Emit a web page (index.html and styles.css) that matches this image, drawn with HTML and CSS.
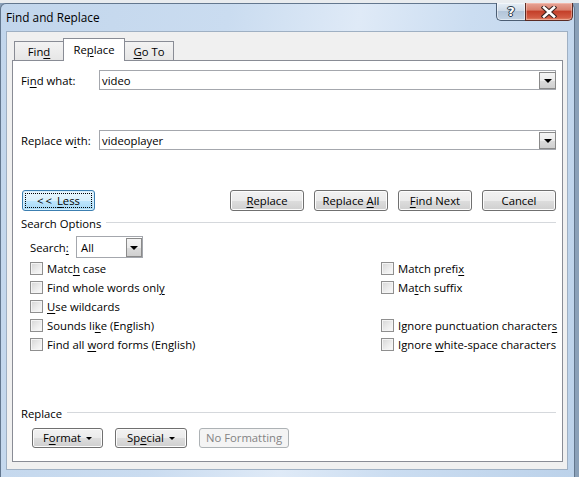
FILE: index.html
```html
<!DOCTYPE html>
<html>
<head>
<meta charset="utf-8">
<title>Find and Replace</title>
<link rel="stylesheet" href="styles.css">
</head>
<body>
<div class="window">
  <div class="titlebar">
    <span class="title">Find and Replace</span>
    <div class="caption">
      <div class="cbtn help"><span>?</span></div>
      <div class="cbtn close">
        <svg width="16" height="12" viewBox="0 0 16 12">
          <path d="M3 1.5 L13 10.5 M13 1.5 L3 10.5" stroke="#3a2420" stroke-width="4.6" stroke-linecap="square" fill="none"/>
          <path d="M3 1.5 L13 10.5 M13 1.5 L3 10.5" stroke="#ffffff" stroke-width="2.6" stroke-linecap="square" fill="none"/>
        </svg>
      </div>
    </div>
  </div>
  <div class="client">
    <div class="tabs">
      <div class="tab t-find"><span>Fin<u>d</u></span></div>
      <div class="tab active t-replace"><span>Re<u>p</u>lace</span></div>
      <div class="tab t-goto"><span><u>G</u>o To</span></div>
    </div>
    <div class="panel">
      <div class="field-row r1">
        <span class="flabel">Fi<u>n</u>d what:</span>
        <div class="combo"><span class="ctext">video</span><span class="ddbtn"><i class="tri"></i></span></div>
      </div>
      <div class="field-row r2">
        <span class="flabel">Replace w<u>i</u>th:</span>
        <div class="combo"><span class="ctext">videoplayer</span><span class="ddbtn"><i class="tri"></i></span></div>
      </div>
      <div class="btn-row">
        <div class="btn focus less"><span class="focusrect"><span><span class="ll">&lt;&lt;</span> <u>L</u>ess</span></span></div>
        <div class="spacer"></div>
        <div class="btn wide"><span><u>R</u>eplace</span></div>
        <div class="btn wide"><span>Replace <u>A</u>ll</span></div>
        <div class="btn wide"><span><u>F</u>ind Next</span></div>
        <div class="btn wide"><span>Cancel</span></div>
      </div>
      <div class="group-head gh1"><span>Search Options</span><i class="rule"></i></div>
      <div class="search-row">
        <span class="slabel">Search<u>:</u></span>
        <div class="select"><span class="ctext">All</span><span class="ddbtn sel"><i class="tri"></i></span></div>
      </div>
      <div class="checks">
        <div class="chk"><i class="box"></i><span>Matc<u>h</u> case</span></div>
        <div class="chk"><i class="box"></i><span>Match prefi<u>x</u></span></div>
        <div class="chk"><i class="box"></i><span>Find whole words onl<u>y</u></span></div>
        <div class="chk"><i class="box"></i><span>Ma<u>t</u>ch suffix</span></div>
        <div class="chk"><i class="box"></i><span><u>U</u>se wildcards</span></div>
        <div class="chk empty"></div>
        <div class="chk"><i class="box"></i><span>Sounds li<u>k</u>e (English)</span></div>
        <div class="chk"><i class="box"></i><span>Ignore punctuation character<u>s</u></span></div>
        <div class="chk"><i class="box"></i><span>Find all <u>w</u>ord forms (English)</span></div>
        <div class="chk"><i class="box"></i><span>Ignore <u>w</u>hite-space characters</span></div>
      </div>
      <div class="group-head gh2"><span>Replace</span><i class="rule"></i></div>
      <div class="bottom-row">
        <div class="btn fmt"><span>F<u>o</u>rmat</span><i class="mtri"></i></div>
        <div class="btn spc"><span>Sp<u>e</u>cial</span><i class="mtri"></i></div>
        <div class="btn disabled nof"><span>No Formatting</span></div>
      </div>
    </div>
  </div>
</div>
</body>
</html>
```
FILE: styles.css
```css
html, body {
  margin: 0;
  padding: 0;
}
body {
  width: 579px;
  height: 477px;
  overflow: hidden;
  background: linear-gradient(#e9ecef 0, #e9ecef 3px, #8aa0b8 3px);
  font-family: "Open Sans", "Noto Sans", sans-serif;
  font-size: 11.3px;
  color: #000;
}
u {
  text-decoration: underline;
  text-underline-offset: 2px;
  text-decoration-thickness: 1px;
}
.window {
  margin-top: 3px;
  width: 575px;
  height: 474px;
  box-sizing: border-box;
  border: 1px solid #63778e;
  border-bottom: none;
  border-radius: 6px 6px 0 0;
  background: linear-gradient(100deg, #c2d6ec 0%, #cadcf0 35%, #dfeaf7 55%, #cbddf1 72%, #bcd2ea 100%);
  display: flex;
  flex-direction: column;
}
.titlebar {
  height: 27px;
  display: flex;
  align-items: flex-start;
}
.title {
  margin-left: 5px;
  line-height: 26px;
  font-size: 11.8px;
}
.caption {
  margin-left: auto;
  margin-right: 1px;
  margin-top: -1px;
  display: flex;
}
.cbtn {
  height: 18px;
  box-sizing: border-box;
  border: 1px solid #4c5e74;
  border-top: none;
  display: flex;
  align-items: center;
  justify-content: center;
}
.help {
  width: 29px;
  border-right: none;
  border-radius: 0 0 0 5px;
  background: linear-gradient(#e6eef6 0%, #cfdbe8 45%, #b3c5d9 50%, #c3d3e4 100%);
  box-shadow: inset 0 0 0 1px rgba(255,255,255,0.5);
}
.help span {
  font-family: "DejaVu Sans", sans-serif;
  font-weight: bold;
  font-size: 13px;
  color: #fff;
  line-height: 14px;
  text-shadow: 0 0 1px #2c3d50, 0 0 1px #2c3d50, 1px 0 0 #2c3d50, -1px 0 0 #2c3d50, 0 1px 0 #2c3d50, 0 -1px 0 #2c3d50;
}
.close {
  width: 48px;
  border-radius: 0 0 5px 0;
  border-color: #5a2b25;
  background: linear-gradient(#e7a597 0%, #d9806d 40%, #c4402a 50%, #d25b43 85%, #e08b6c 100%);
  box-shadow: inset 0 0 0 1px rgba(255,210,200,0.45);
}
.close svg {
  display: block;
}
.client {
  margin-left: 5px;
  width: 562px;
  height: 439px;
  box-sizing: border-box;
  border: 1px solid #9fb0c3;
  background: #f0f0f0;
  padding-top: 6px;
}
.tabs {
  margin-left: 7px;
  height: 23px;
  margin-bottom: -1px;
  display: flex;
  align-items: flex-start;
  position: relative;
  z-index: 1;
}
.tab {
  box-sizing: border-box;
  margin-top: 3px;
  height: 19px;
  border: 1px solid #898c95;
  border-bottom: none;
  background: linear-gradient(#f3f3f3, #e6e6e6);
  display: flex;
  justify-content: center;
  align-items: center;
  padding-top: 1px;
}
.t-find { width: 50px; }
.t-replace { width: 62px; }
.t-goto { width: 50px; margin-left: -1px; }
.tab.active {
  margin-top: 0;
  height: 23px;
  background: #fff;
  align-items: flex-start;
  padding-top: 3px;
  margin-left: -1px;
  z-index: 2;
}
.panel {
  margin-left: 5px;
  width: 551px;
  height: 402px;
  box-sizing: border-box;
  border: 1px solid #898c95;
  background: #fff;
  padding: 0 6px 0 8px;
  display: flex;
  flex-direction: column;
}
.field-row {
  display: flex;
  align-items: center;
  height: 20px;
}
.r1 { margin-top: 9px; }
.r2 { margin-top: 40px; }
.flabel {
  width: 78px;
}
.combo, .select {
  box-sizing: border-box;
  height: 20px;
  border: 1px solid #a4a7ad;
  background: #fff;
  display: flex;
  align-items: center;
}
.combo {
  width: 457px;
}
.ctext {
  padding-left: 2px;
  flex: 1;
}
.ddbtn {
  box-sizing: border-box;
  width: 17px;
  height: 17px;
  margin-right: -1px;
  border: 1px solid #8a8a8a;
  background: linear-gradient(#f4f4f4 0%, #ebebeb 50%, #dcdcdc 51%, #cfcfcf 100%);
  display: flex;
  align-items: center;
  justify-content: center;
}
.tri {
  width: 0;
  height: 0;
  border-left: 4px solid transparent;
  border-right: 4px solid transparent;
  border-top: 4px solid #000;
  margin-top: 1px;
}
.btn-row {
  margin-top: 40px;
  height: 21px;
  display: flex;
}
.spacer { flex: 1; }
.btn {
  box-sizing: border-box;
  height: 21px;
  border: 1px solid #707070;
  border-radius: 3px;
  background: linear-gradient(#f2f2f2 0%, #ebebeb 50%, #dddddd 51%, #cfcfcf 100%);
  box-shadow: inset 0 0 0 1px #fcfcfc;
  display: flex;
  align-items: center;
  justify-content: center;
  padding-bottom: 1px;
  white-space: nowrap;
}
.btn.wide {
  width: 74px;
  margin-left: 10px;
}
.btn.wide:nth-child(3) { margin-left: 0; }
.btn.less {
  width: 73px;
  margin-left: 1px;
}
.btn.focus {
  border-color: #3c7fb1;
  background: linear-gradient(#eaf6fd 0%, #d9f0fc 50%, #bee6fd 51%, #a7d9f5 100%);
  box-shadow: inset 0 0 0 1px #d6eefb;
  padding: 2px;
}
.focusrect {
  flex: 1;
  align-self: stretch;
  border: 1px dotted #000;
  display: flex;
  align-items: center;
  justify-content: center;
  padding-bottom: 1px;
}
.ll {
  letter-spacing: 2px;
}
.group-head {
  height: 16px;
  display: flex;
  align-items: center;
}
.gh1 { margin-top: 4px; }
.gh2 { margin-top: 51px; }
.rule {
  flex: 1;
  height: 1px;
  background: #d5d8dc;
  margin-left: 5px;
  margin-top: -1px;
}
.search-row {
  margin-top: 5px;
  padding-left: 9px;
  height: 22px;
  display: flex;
  align-items: center;
}
.slabel {
  width: 46px;
}
.select {
  width: 67px;
  height: 22px;
}
.select .ctext { padding-left: 4px; }
.ddbtn.sel {
  width: 16px;
  height: 19px;
  margin-right: 0;
}
.checks {
  margin-top: 1px;
  padding-left: 9px;
  display: grid;
  grid-template-columns: 351px 1fr;
  grid-auto-rows: 19px;
}
.chk {
  display: flex;
  align-items: center;
  white-space: nowrap;
}
.box {
  box-sizing: border-box;
  width: 13px;
  height: 13px;
  margin-right: 4px;
  border: 1px solid #8f8f8f;
  background: linear-gradient(135deg, #d5d5d5 0%, #ececec 55%, #fbfbfb 100%);
  box-shadow: inset 0 0 0 1px #f4f4f4;
}
.bottom-row {
  margin-top: 7px;
  padding-left: 11px;
  display: flex;
}
.bottom-row .btn {
  height: 20px;
  margin-right: 12px;
}
.fmt { width: 71px; }
.spc { width: 72px; }
.nof { width: 90px; }
.mtri {
  width: 0;
  height: 0;
  border-left: 3px solid transparent;
  border-right: 3px solid transparent;
  border-top: 3px solid #000;
  margin-left: 5px;
  margin-top: 1px;
}
.btn.disabled {
  border-color: #adb2b5;
  background: #f4f4f4;
  box-shadow: none;
  color: #838383;
}
```
